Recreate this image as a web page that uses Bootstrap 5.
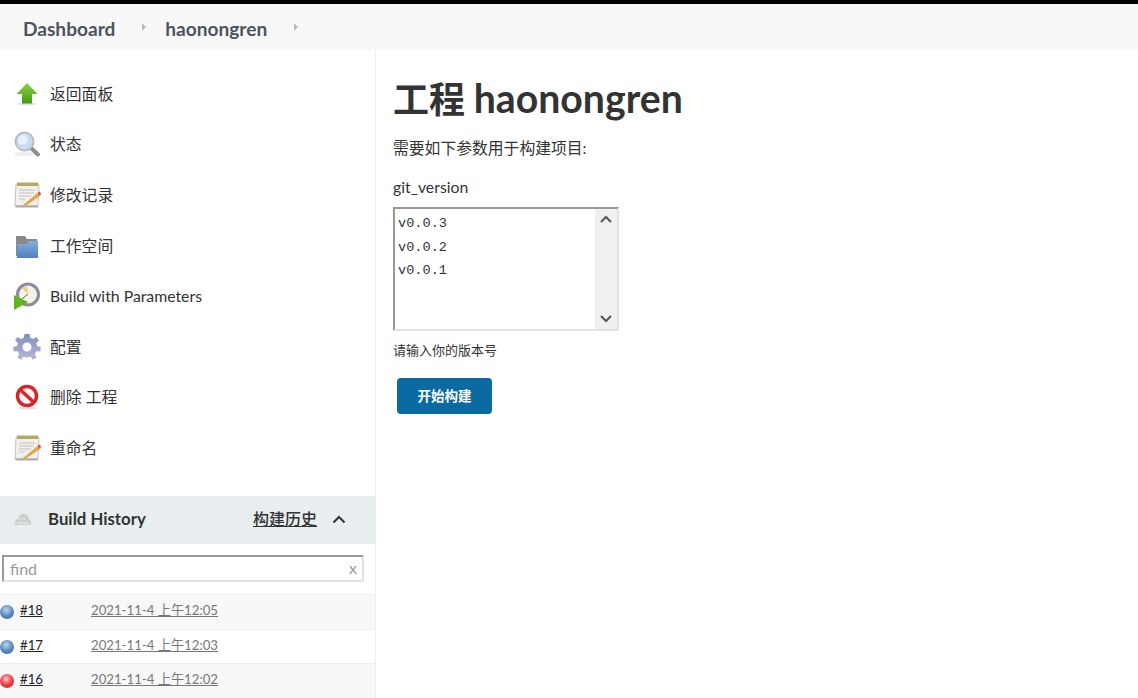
<!DOCTYPE html>
<html lang="zh">
<head>
<meta charset="utf-8">
<title>haonongren</title>
<link href="https://cdn.jsdelivr.net/npm/bootstrap@5.3.0/dist/css/bootstrap.min.css" rel="stylesheet">
<style>
html,body{height:698px;overflow:hidden}
body{font-family:Lato,"Noto Sans CJK SC",sans-serif;font-size:16px;color:#333;background:#fff;line-height:1.4}
.topline{height:4px;background:#000}
.crumbs{height:46px;background:#f8f8f8;padding-left:23px;padding-top:4px;font-weight:700;font-size:19.100px;color:#4d545d}
.crumbs a{color:#4d545d;text-decoration:none}
.crumb-sep{width:0;height:0;border-left:4px solid #bbb;border-top:4px solid transparent;border-bottom:4px solid transparent;margin-top:-4px}
.sep-a{margin-left:27px;margin-right:19px}
.sep-b{margin-left:27px}
.mainrow{height:648px}
.sidepane{width:376px;flex:none;border-right:1px solid #eee}
.tasks{padding-top:18.600px;height:446px}
.taskrow{height:50.600px;padding-left:13px;font-size:15.800px;color:#333}
.taskicon{width:28px;height:28px;flex:none;margin-right:9px}
.hist-head{height:48px;background:#e9eef1;padding-left:14px;padding-right:29px;padding-bottom:2px;color:#333}
.hist-title{font-weight:700;font-size:16.800px;margin-left:16px}
.hist-link{color:#333;text-decoration:underline;font-weight:500;font-size:16px;margin-right:15px}
.findwrap{height:50px;padding:11px 11px 0 2px}
.findbox{height:27px;border:2px solid;border-color:#999 #e2e2e2 #e2e2e2 #999;padding:0 5px 0 6px;color:#999;font-size:16px;line-height:23px}
.findx{line-height:21px}
.buildrow{height:34.700px;border-top:1px solid #e9eef1;font-size:13.200px}
.buildrow.odd{background:#f8f8f8}
.ball{width:14px;height:14px;border-radius:50%;flex:none;margin-right:6px}
.ball-blue{background:radial-gradient(circle at 45% 35%,#c3d6ea 0,#5a8cc4 50%,#2c5a94 100%)}
.ball-red{background:radial-gradient(circle at 45% 35%,#ffc4c4 0,#ef3b42 50%,#c91f28 100%)}
.buildno{color:#222;text-decoration:underline;width:71px;padding-bottom:3px}
.builddate{color:#777;text-decoration:underline;padding-bottom:3px}
.mainpane{padding-left:17px}
.pagetitle{font-size:36px;font-weight:700;color:#333;margin:23px 0 0;line-height:50px}
.title-latin{font-size:39.200px}
.intro{font-size:15.800px;margin:12px 0 0;line-height:24px}
.paramname{margin-top:15px;font-size:15.800px;line-height:24px}
.listbox{width:226px;height:124px;margin-top:8px;border:2px solid;border-color:#999 #e2e2e2 #e2e2e2 #999;background:#fff}
.listopts{font-family:"Liberation Mono",monospace;font-size:13.600px;line-height:23.500px;padding:3px 0 0 3px;color:#333}
.scrolltrack{width:22px;background:#f0f0f0;padding:3px 0}
.hint{font-size:13px;margin-top:9px;line-height:20px}
.gobtn{background:#0b6aa2;border:0;color:#fff;font-size:13.500px;font-weight:700;width:95px;height:36px;border-radius:4px;margin:18px 0 0 4px;padding:0}
</style>
</head>
<body>
<div class="topline"></div>
<nav class="crumbs d-flex align-items-center">
  <a href="#">Dashboard</a><span class="crumb-sep sep-a"></span>
  <a href="#">haonongren</a><span class="crumb-sep sep-b"></span>
</nav>
<div class="mainrow d-flex">
  <aside class="sidepane">
    <div class="tasks">
      <div class="taskrow d-flex align-items-center">
        <svg class="taskicon" viewBox="0 0 28 28"><defs><linearGradient id="g1" x1="0" y1="0" x2="0" y2="1"><stop offset="0" stop-color="#8fd14a"/><stop offset="1" stop-color="#3f9a12"/></linearGradient></defs><ellipse cx="14" cy="24" rx="9" ry="1.500" fill="#ddd"/><path d="M14 3 24.500 14H19V23.500H9V14H3.500Z" fill="url(#g1)"/></svg>
        <span>返回面板</span></div>
      <div class="taskrow d-flex align-items-center">
        <svg class="taskicon" viewBox="0 0 28 28"><ellipse cx="12" cy="24" rx="11" ry="2" fill="#eee"/><path d="M18 18 25 24.500" stroke="#8d8d8d" stroke-width="4" stroke-linecap="round"/><circle cx="11.500" cy="11.500" r="9" fill="#c9dcf0" stroke="#bbb" stroke-width="2"/><circle cx="10" cy="10" r="5" fill="#e6f0fa"/></svg>
        <span>状态</span></div>
      <div class="taskrow d-flex align-items-center">
        <svg class="taskicon" viewBox="0 0 28 28"><path d="M3 3H26L25 25H2Z" fill="#f1f0ec" stroke="#c4c4c0"/><path d="M2.500 25.500H25" stroke="#aaa" stroke-width="2"/><rect x="4" y="1.500" width="21" height="3.500" fill="#b9a865"/><path d="M6 9H22M6 12H21M6 15H18M6 18H12" stroke="#c2c2c2"/><path d="M9 25 24.500 12 27 15 13 24.500Z" fill="#e2a544"/><path d="M24.500 12 27 15 28 12.500 26.500 10.500Z" fill="#d8504a"/></svg>
        <span>修改记录</span></div>
      <div class="taskrow d-flex align-items-center">
        <svg class="taskicon" viewBox="0 0 28 28"><path d="M3 4H12L14 7H24V24H3Z" fill="#8a8a8a"/><defs><linearGradient id="g2" x1="0" y1="0" x2="0" y2="1"><stop offset="0" stop-color="#84aedd"/><stop offset="1" stop-color="#4f82c0"/></linearGradient></defs><path d="M4 12 14 12 16 9H25V26H4Z" fill="url(#g2)"/></svg>
        <span>工作空间</span></div>
      <div class="taskrow d-flex align-items-center">
        <svg class="taskicon" viewBox="0 0 28 28"><circle cx="15" cy="12.500" r="10.500" fill="#f4f1e8" stroke="#8e8aa0" stroke-width="3"/><path d="M15 12 9 6 14 4.500Z" fill="#e8cd72"/><path d="M15 12 9 17" stroke="#666"/><path d="M1 13 15 20 1 28Z" fill="#5fb51f"/></svg>
        <span>Build with Parameters</span></div>
      <div class="taskrow d-flex align-items-center">
        <svg class="taskicon" viewBox="0 0 28 28"><defs><linearGradient id="g3" x1="0" y1="0" x2="0" y2="1"><stop offset="0" stop-color="#7e92bd"/><stop offset="1" stop-color="#b9b6d6"/></linearGradient></defs><path fill="url(#g3)" fill-rule="evenodd" d="M11.500 1H16.500L17.300 4.800 20.300 6 23.500 3.900 25.900 7.500 23.200 10 24 13 27.800 14 27.300 18.500 23.400 18.300 21.800 21 23.700 24.400 19.900 26.800 17.500 23.800 14 24.500 10.500 23.800 8.100 26.800 4.300 24.400 6.200 21 4.600 18.300 .7 18.500 .2 14 4 13 4.800 10 2.100 7.500 4.500 3.900 7.700 6 10.700 4.800ZM14 9.500A4.500 4.500 0 1 0 14 18.500 4.500 4.500 0 1 0 14 9.500Z"/></svg>
        <span>配置</span></div>
      <div class="taskrow d-flex align-items-center">
        <svg class="taskicon" viewBox="0 0 28 28"><ellipse cx="14" cy="25" rx="9" ry="1.500" fill="#ddd"/><circle cx="14" cy="13" r="9.500" fill="#f4f4f4" stroke="#d6262c" stroke-width="3.500"/><path d="M7 6.500 21 19.500" stroke="#d6262c" stroke-width="3.500"/></svg>
        <span>删除 工程</span></div>
      <div class="taskrow d-flex align-items-center">
        <svg class="taskicon" viewBox="0 0 28 28"><path d="M3 3H26L25 25H2Z" fill="#f1f0ec" stroke="#c4c4c0"/><path d="M2.500 25.500H25" stroke="#aaa" stroke-width="2"/><rect x="4" y="1.500" width="21" height="3.500" fill="#b9a865"/><path d="M6 9H22M6 12H21M6 15H18M6 18H12" stroke="#c2c2c2"/><path d="M9 25 24.500 12 27 15 13 24.500Z" fill="#e2a544"/><path d="M24.500 12 27 15 28 12.500 26.500 10.500Z" fill="#d8504a"/></svg>
        <span>重命名</span></div>
    </div>
    <div class="hist-head d-flex align-items-center">
      <svg width="18" height="14" viewBox="0 0 18 14"><path d="M1 13C-.5 9 2 7 4 7 5 3 8 .5 11 2.500 14 3 15 6 15 7 17 8 18 11 17 13Z" fill="#cfcfcf"/><path d="M5 8C7 6 9 6 11 8M3 11H15" stroke="#eee" fill="none"/></svg>
      <span class="hist-title">Build History</span>
      <a href="#" class="hist-link ms-auto">构建历史</a>
      <svg width="14" height="9" viewBox="0 0 14 9"><path d="M1.500 7.500 7 2 12.500 7.500" fill="none" stroke="#333" stroke-width="2"/></svg>
    </div>
    <div class="findwrap">
      <div class="findbox d-flex justify-content-between"><span>find</span><span class="findx">x</span></div>
    </div>
    <div class="buildrow odd d-flex align-items-center"><span class="ball ball-blue"></span><a href="#" class="buildno">#18</a><a href="#" class="builddate">2021-11-4 上午12:05</a></div>
    <div class="buildrow d-flex align-items-center"><span class="ball ball-blue"></span><a href="#" class="buildno">#17</a><a href="#" class="builddate">2021-11-4 上午12:03</a></div>
    <div class="buildrow odd d-flex align-items-center"><span class="ball ball-red"></span><a href="#" class="buildno">#16</a><a href="#" class="builddate">2021-11-4 上午12:02</a></div>
  </aside>
  <main class="mainpane flex-grow-1">
    <h1 class="pagetitle">工程 <span class="title-latin">haonongren</span></h1>
    <p class="intro">需要如下参数用于构建项目:</p>
    <div class="paramname">git_version</div>
    <div class="listbox d-flex">
      <div class="listopts flex-grow-1"><div>v0.0.3</div><div>v0.0.2</div><div>v0.0.1</div></div>
      <div class="scrolltrack d-flex flex-column justify-content-between align-items-center">
        <svg width="12" height="16" viewBox="0 0 12 16"><path d="M1 10 6 5 11 10" fill="none" stroke="#555" stroke-width="2"/></svg>
        <svg width="12" height="16" viewBox="0 0 12 16"><path d="M1 6 6 11 11 6" fill="none" stroke="#555" stroke-width="2"/></svg>
      </div>
    </div>
    <div class="hint">请输入你的版本号</div>
    <button class="gobtn btn d-block" type="button">开始构建</button>
  </main>
</div>
<script src="https://cdn.jsdelivr.net/npm/bootstrap@5.3.0/dist/js/bootstrap.bundle.min.js"></script>
</body>
</html>
